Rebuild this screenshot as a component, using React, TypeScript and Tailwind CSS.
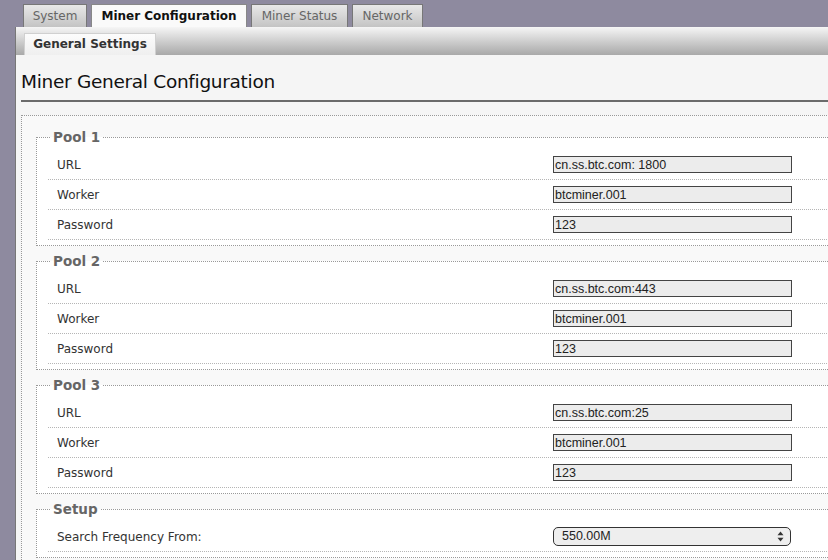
const tabs = [
  { label: 'System', w: 'w-[64px]' },
  { label: 'Miner Configuration', w: 'w-[156px]', active: true },
  { label: 'Miner Status', w: 'w-[97px]' },
  { label: 'Network', w: 'w-[71px]' },
];

const pools = [
  { name: 'Pool 1', url: 'cn.ss.btc.com: 1800', worker: 'btcminer.001', password: '123' },
  { name: 'Pool 2', url: 'cn.ss.btc.com:443', worker: 'btcminer.001', password: '123' },
  { name: 'Pool 3', url: 'cn.ss.btc.com:25', worker: 'btcminer.001', password: '123' },
];

function Row({ label, children }: { label: string; children: React.ReactNode }) {
  return (
    <div className="flex h-[30px] items-center border-b border-dotted border-[#b5b5b5]">
      <div className="w-[505px] pl-[9px] text-[12px] text-[#333]">{label}</div>
      {children}
    </div>
  );
}

function TextField({ value }: { value: string }) {
  return (
    <input
      readOnly
      value={value}
      className="h-[17px] w-[239px] border border-[#444] bg-[#ececec] pl-[1px] font-['Liberation_Sans',Arial,sans-serif] text-[12.5px] leading-[15px] text-[#222] outline-none"
    />
  );
}

function Group({ title, children }: { title: string; children: React.ReactNode }) {
  return (
    <fieldset className="mb-[7px] border border-dotted border-[#999] bg-white pt-[5px] pb-[5px] pl-[11px]">
      <legend className="ml-[2px] px-[3px] text-[13.5px] font-bold leading-[16px] text-[#666]">{title}</legend>
      {children}
    </fieldset>
  );
}

export default function App() {
  return (
    <div className="h-[560px] w-[828px] overflow-hidden bg-[#8e8a9f] pl-[15px] font-['DejaVu_Sans',Verdana,sans-serif]">
      {/* top level tabs */}
      <div className="flex h-[27px] items-end gap-[4px] pl-[8px]">
        {tabs.map((t) => (
          <div
            key={t.label}
            className={
              t.active
                ? `${t.w} h-[23px] border border-b-0 border-[#888] bg-[#fafafa] text-center text-[12px] font-bold leading-[22px] text-[#111]`
                : `${t.w} h-[23px] border border-b-0 border-[#777] bg-linear-to-b from-[#e8e8e8] to-[#c4c4c4] text-center text-[12px] leading-[22px] text-[#666]`
            }
          >
            {t.label}
          </div>
        ))}
      </div>

      <div className="w-[900px] border-l border-[#777] bg-[#f5f5f5]">
        {/* sub tabs */}
        <div className="flex h-[28px] items-end bg-linear-to-b from-[#f6f6f6] to-[#a9a9a9] pl-[8px]">
          <div className="h-[22px] w-[132px] border border-b-0 border-[#d0d0d0] bg-linear-to-b from-[#fcfcfc] to-[#efefef] text-center text-[12px] font-bold leading-[21px] text-[#333]">
            General Settings
          </div>
        </div>

        <div className="pl-[5px]">
          <h1 className="border-b-2 border-[#6b6b6b] pt-[16px] pb-[7px] text-[18.5px] leading-[22px] tracking-[-0.3px] text-[#111]">
            Miner General Configuration
          </h1>

          <div className="mt-[13px] border border-dotted border-[#999] bg-[#f9f9f9] pt-[13px] pl-[14px]">
            {pools.map((p) => (
              <Group key={p.name} title={p.name}>
                <Row label="URL">
                  <TextField value={p.url} />
                </Row>
                <Row label="Worker">
                  <TextField value={p.worker} />
                </Row>
                <Row label="Password">
                  <TextField value={p.password} />
                </Row>
              </Group>
            ))}

            <Group title="Setup">
              <Row label="Search Frequency From:">
                <div className="flex h-[19px] w-[238px] items-center justify-between rounded-[5px] border border-[#333] bg-[#eeeeee] pr-[6px] pl-[8px] font-['Liberation_Sans',Arial,sans-serif] text-[12.5px] text-[#222]">
                  <span>550.00M</span>
                  <svg width="7" height="11" viewBox="0 0 7 11">
                    <path d="M3.5 0.5 L6.5 4.2 L0.5 4.2 Z" fill="#333" />
                    <path d="M3.5 10.5 L6.5 6.8 L0.5 6.8 Z" fill="#333" />
                  </svg>
                </div>
              </Row>
            </Group>
          </div>
        </div>
      </div>
    </div>
  );
}
